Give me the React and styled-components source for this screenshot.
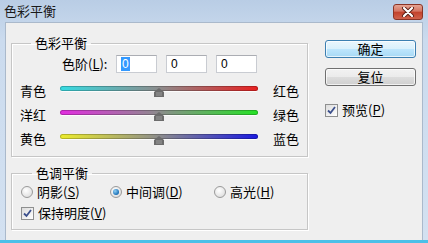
import styled, { createGlobalStyle } from "styled-components";

const GlobalStyle = createGlobalStyle`
  body {
    margin: 0;
    background: #ffffff;
    font-family: "Noto Sans CJK SC", "Noto Sans", sans-serif;
    font-size: 13px;
    color: #000;
  }
`;

// dialog frame
const Window = styled.div`
  width: 428px;
  height: 243px;
  box-sizing: border-box;
  display: flex;
  flex-direction: column;
  background: linear-gradient(to bottom, #b9cde5, #cbdbee 40px, #d3e1f1);
  border-bottom: 3px solid #4cc0e8;
`;

const TitleBar = styled.div`
  height: 22px;
  flex: none;
  display: flex;
  align-items: center;
  justify-content: space-between;
  padding: 0 5px 0 4px;
`;

const Title = styled.div`
  font-size: 13px;
  line-height: 16px;
  color: #1a1a1a;
`;

const CloseButton = styled.div`
  width: 30px;
  height: 16px;
  margin-top: 1px;
  box-sizing: border-box;
  border: 1px solid #8a3426;
  border-radius: 3px;
  background: linear-gradient(to bottom, #e5a493, #d47462 45%, #c2412b 50%, #d0624c);
  display: flex;
  align-items: center;
  justify-content: center;
`;

const Client = styled.div`
  flex: 1;
  margin: 0 5px;
  background: #efefef;
  border: 1px solid #aab9cb;
  border-bottom: none;
  display: flex;
  padding: 12px 0 0 5px;
`;

const Main = styled.div`
  display: flex;
  flex-direction: column;
  gap: 8px;
`;

const Group = styled.fieldset`
  width: 297px;
  box-sizing: border-box;
  margin: 0;
  min-width: 0;
  border: 1px solid #c6c6c6;
  box-shadow: inset 1px 1px 0 #ffffff, 1px 1px 0 #ffffff;
  padding: ${(p) => p.$pad};
`;

const Legend = styled.legend`
  margin-left: 11px;
  padding: 0 4px;
  font-size: 13px;
  line-height: 16px;
`;

const LevelRow = styled.div`
  display: flex;
  align-items: center;
  height: 18px;
  margin: 0 0 6px 42px;
`;

const LevelLabel = styled.span`
  width: 54px;
  line-height: 16px;
`;

const NumberInput = styled.div`
  width: 41px;
  height: 18px;
  box-sizing: border-box;
  margin-right: 9px;
  border: 1px solid #c9ccd2;
  border-top-color: #abadb3;
  background: #ffffff;
  padding-left: 4px;
  font-family: "Liberation Sans", sans-serif;
  font-size: 12px;
  line-height: 16px;
`;

const Selected = styled.span`
  background: #3399ff;
  color: #ffffff;
  padding: 0 1px;
`;

const SliderRow = styled.div`
  display: flex;
  align-items: center;
  height: 24px;
`;

const ColorLabel = styled.span`
  width: ${(p) => p.$w}px;
  margin-left: ${(p) => p.$ml || 0}px;
  line-height: 16px;
`;

const Slider = styled.div`
  position: relative;
  width: 198px;
  height: 13px;
`;

const Track = styled.div`
  height: 5px;
  margin-top: 1px;
  border-radius: 3px;
  background: linear-gradient(to right, ${(p) => p.$from}, #8c8c8c 50%, ${(p) => p.$to});
  box-shadow: inset 0 0 0 1px rgba(0, 0, 0, 0.22), 0 1px 0 rgba(255, 255, 255, 0.8);
`;

const Thumb = styled.svg`
  position: absolute;
  top: 3px;
  left: 94px;
`;

const RadioRow = styled.div`
  display: flex;
  align-items: center;
  height: 16px;
`;

const Option = styled.label`
  display: flex;
  align-items: center;
  gap: 4px;
  width: ${(p) => p.$w || "auto"};
  line-height: 16px;
`;

const Radio = styled.span`
  width: 12px;
  height: 12px;
  box-sizing: border-box;
  border-radius: 50%;
  border: 1px solid #9a9a9a;
  background: radial-gradient(circle at 40% 35%, #ffffff, #e2e2e2 70%, #d0d0d0);
  display: flex;
  align-items: center;
  justify-content: center;
  &::after {
    content: "";
    display: ${(p) => (p.$on ? "block" : "none")};
    width: 6px;
    height: 6px;
    border-radius: 50%;
    background: radial-gradient(circle at 35% 35%, #8fd0f5, #1a6fb6 70%, #0f4d8a);
  }
`;

const Box = styled.span`
  width: 13px;
  height: 13px;
  box-sizing: border-box;
  border: 1px solid #8e8f8f;
  background: linear-gradient(135deg, #dcdcdc, #ffffff);
  display: flex;
  align-items: center;
  justify-content: center;
`;

const CheckRow = styled.div`
  display: flex;
  align-items: center;
  height: 16px;
  margin-top: ${(p) => p.$mt || 0}px;
`;

const Side = styled.div`
  display: flex;
  flex-direction: column;
  margin-left: 17px;
  padding-top: 5px;
`;

const Button = styled.div`
  width: 91px;
  height: 18px;
  box-sizing: border-box;
  margin-bottom: 10px;
  border: 1px solid ${(p) => (p.$default ? "#3c7fb1" : "#707070")};
  border-radius: 3px;
  background: ${(p) =>
    p.$default
      ? "linear-gradient(to bottom, #eaf6fd, #d9f0fc 50%, #bee6fd 50%, #a7d9f5)"
      : "linear-gradient(to bottom, #f2f2f2, #ebebeb 50%, #dddddd 50%, #cfcfcf)"};
  box-shadow: inset 0 0 0 1px rgba(255, 255, 255, 0.7);
  text-align: center;
  line-height: 16px;
  font-size: 13px;
`;

const Key = styled.span`
  text-decoration: underline;
`;

const Check = () => (
  <Box>
    <svg width="9" height="9" viewBox="0 0 9 9">
      <path d="M1 4.5 L3.5 7 L8 1" fill="none" stroke="#3b4f8c" strokeWidth="1.8" />
    </svg>
  </Box>
);

const sliders = [
  { left: "青色", right: "红色", from: "#36dbe2", to: "#e82020" },
  { left: "洋红", right: "绿色", from: "#e22ce0", to: "#26e226" },
  { left: "黄色", right: "蓝色", from: "#ecec2c", to: "#1a1ae0" },
];

export default function App() {
  return (
    <>
      <GlobalStyle />
      <Window>
        <TitleBar>
          <Title>色彩平衡</Title>
          <CloseButton>
            <svg width="14" height="10" viewBox="0 0 14 10">
              <path d="M3 1 L11 9 M11 1 L3 9" stroke="#5a1e14" strokeWidth="4" strokeLinecap="round" />
              <path d="M3 1 L11 9 M11 1 L3 9" stroke="#ffffff" strokeWidth="2.2" strokeLinecap="round" />
            </svg>
          </CloseButton>
        </TitleBar>
        <Client>
          <Main>
            <Group $pad="4px 8px 5px 8px">
              <Legend>色彩平衡</Legend>
              <LevelRow>
                <LevelLabel>
                  色阶(<Key>L</Key>):
                </LevelLabel>
                <NumberInput>
                  <Selected>0</Selected>
                </NumberInput>
                <NumberInput>0</NumberInput>
                <NumberInput>0</NumberInput>
              </LevelRow>
              {sliders.map((s) => (
                <SliderRow key={s.left}>
                  <ColorLabel $w={40}>{s.left}</ColorLabel>
                  <Slider>
                    <Track $from={s.from} $to={s.to} />
                    <Thumb width="10" height="9" viewBox="0 0 10 9">
                      <path d="M5 0 L10 4 L10 9 L0 9 L0 4 Z" fill="#6c6c6c" />
                      <path d="M2 5 H8 M2 7 H8" stroke="#9a9a9a" strokeWidth="1" />
                    </Thumb>
                  </Slider>
                  <ColorLabel $w={26} $ml={15}>
                    {s.right}
                  </ColorLabel>
                </SliderRow>
              ))}
            </Group>
            <Group $pad="3px 8px 8px 9px">
              <Legend>色调平衡</Legend>
              <RadioRow>
                <Option $w="89px">
                  <Radio />
                  <span>
                    阴影(<Key>S</Key>)
                  </span>
                </Option>
                <Option $w="104px">
                  <Radio $on />
                  <span>
                    中间调(<Key>D</Key>)
                  </span>
                </Option>
                <Option>
                  <Radio />
                  <span>
                    高光(<Key>H</Key>)
                  </span>
                </Option>
              </RadioRow>
              <CheckRow $mt={5}>
                <Option>
                  <Check />
                  <span>
                    保持明度(<Key>V</Key>)
                  </span>
                </Option>
              </CheckRow>
            </Group>
          </Main>
          <Side>
            <Button $default>确定</Button>
            <Button>复位</Button>
            <CheckRow $mt={6}>
              <Option>
                <Check />
                <span>
                  预览(<Key>P</Key>)
                </span>
              </Option>
            </CheckRow>
          </Side>
        </Client>
      </Window>
    </>
  );
}
